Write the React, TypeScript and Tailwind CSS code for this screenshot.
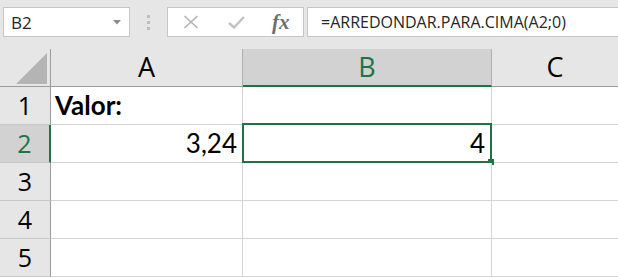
const rows = [
  { n: "1", a: "Valor:", b: "" },
  { n: "2", a: "3,24", b: "4" },
  { n: "3", a: "", b: "" },
  { n: "4", a: "", b: "" },
  { n: "5", a: "", b: "" },
];

function FormulaBar() {
  return (
    <div className="flex h-[49px] items-start pt-[7px] pl-[3px] font-['Open_Sans',sans-serif] text-[16px] text-[#262626]">
      <div className="flex h-[30px] w-[127px] items-center justify-between border border-[#c6c6c6] bg-white pl-[7px] pr-[8px]">
        <span className="pt-[1px] text-[17px] leading-none">B2</span>
        <svg width="8" height="5" viewBox="0 0 8 5">
          <path d="M0 0h8L4 4.5z" fill="#8a8a8a" />
        </svg>
      </div>
      <div className="flex w-[37px] flex-col items-center gap-[3px] pt-[8px]">
        <span className="h-[3px] w-[3px] bg-[#bdbdbd]" />
        <span className="h-[3px] w-[3px] bg-[#bdbdbd]" />
        <span className="h-[3px] w-[3px] bg-[#bdbdbd]" />
      </div>
      <div className="flex h-[30px] w-[137px] items-center border border-[#c6c6c6] bg-white pl-[14px]">
        <svg width="16" height="14" viewBox="0 0 16 14" className="ml-[1px]">
          <path d="M1.5 1l13 12M14.5 1l-13 12" stroke="#b3b3b3" strokeWidth="1.6" />
        </svg>
        <svg width="17" height="13" viewBox="0 0 17 13" className="ml-[29px]">
          <path d="M1 7l5 4.5L16 1" stroke="#c2c2c2" strokeWidth="2.4" fill="none" />
        </svg>
        <span className="ml-[27px] font-['Liberation_Serif',serif] text-[21px] font-bold italic leading-none text-[#6e6e6e]">
          fx
        </span>
      </div>
      <div className="ml-[3px] flex h-[30px] flex-1 items-center border border-r-0 border-[#c6c6c6] bg-white pl-[13px]">
        <span className="leading-none">=ARREDONDAR.PARA.CIMA(A2;0)</span>
      </div>
    </div>
  );
}

export default function App() {
  return (
    <div className="h-[277px] w-[618px] overflow-hidden bg-[#e6e6e6]">
      <FormulaBar />

      <div className="grid grid-cols-[51px_192px_249px_1fr] font-['Open_Sans',sans-serif]">
        {/* header */}
        <div className="flex h-[38px] items-end justify-end border-r border-b border-[#9b9b9b] pr-[3px] pb-[2px]">
          <svg width="31" height="31" viewBox="0 0 31 31">
            <path d="M31 0V31H0z" fill="#b4b4b4" />
          </svg>
        </div>
        <div className="flex h-[38px] items-center justify-center border-r border-b border-r-[#b0b0b0] border-b-[#9b9b9b] text-[27px] text-black">
          A
        </div>
        <div className="flex h-[38px] items-center justify-center border-r border-b-2 border-r-[#b0b0b0] border-b-[#217346] bg-[#d2d2d2] text-[27px] text-[#217346]">
          B
        </div>
        <div className="flex h-[38px] items-center justify-center border-b border-[#9b9b9b] text-[27px] text-black">
          C
        </div>

        {rows.map((r) => {
          const sel = r.n === "2";
          return [
            <div
              key={r.n + "h"}
              className={
                sel
                  ? "flex h-[38px] items-center justify-center border-r-2 border-b border-r-[#217346] border-b-[#c8c8c8] bg-[#d2d2d2] text-[25px] text-[#217346]"
                  : "flex h-[38px] items-center justify-center border-r border-b border-r-[#9b9b9b] border-b-[#c8c8c8] text-[25px] text-black"
              }
            >
              {r.n}
            </div>,
            <div
              key={r.n + "a"}
              className={
                r.n === "1"
                  ? "flex h-[38px] items-center border-r border-b border-[#d4d4d4] bg-white pl-[4px] font-['Lato',sans-serif] text-[26px] font-bold text-black"
                  : "flex h-[38px] items-center justify-end border-r border-b border-[#d4d4d4] bg-white pr-[5px] font-['Lato',sans-serif] text-[26px] text-black"
              }
            >
              {r.a}
            </div>,
            <div
              key={r.n + "b"}
              className="relative flex h-[38px] items-center justify-end border-r border-b border-[#d4d4d4] bg-white pr-[6px] font-['Lato',sans-serif] text-[26px] text-black"
            >
              {r.b}
              {sel && (
                <>
                  <div className="absolute -top-[2px] -left-[1px] -right-[1px] -bottom-[1px] border-2 border-[#217346]" />
                  <div className="absolute -right-[3px] -bottom-[3px] h-[6px] w-[6px] bg-[#217346]" />
                </>
              )}
            </div>,
            <div key={r.n + "c"} className="h-[38px] border-b border-[#d4d4d4] bg-white" />,
          ];
        })}
      </div>
    </div>
  );
}
